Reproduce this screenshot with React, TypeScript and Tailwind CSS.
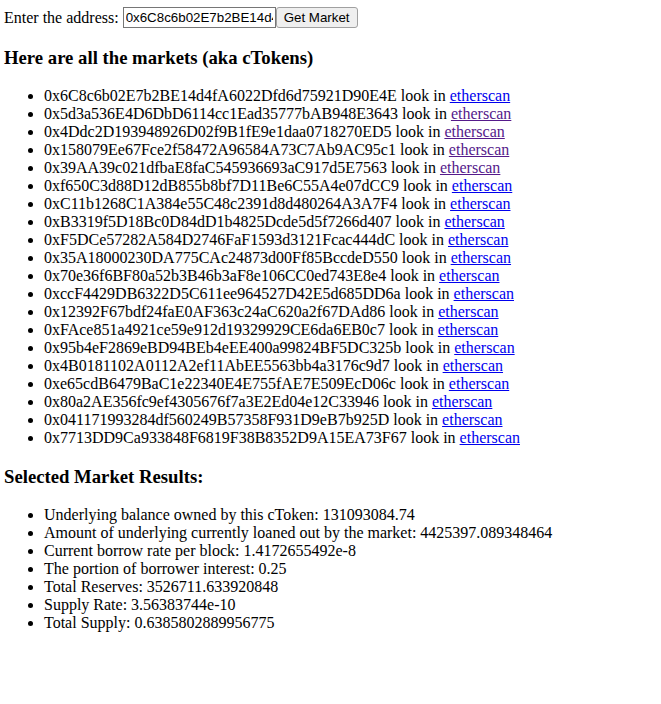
import React, { useState } from "react";

const markets: { address: string; visited?: boolean }[] = [
  { address: "0x6C8c6b02E7b2BE14d4fA6022Dfd6d75921D90E4E" },
  { address: "0x5d3a536E4D6DbD6114cc1Ead35777bAB948E3643", visited: true },
  { address: "0x4Ddc2D193948926D02f9B1fE9e1daa0718270ED5", visited: true },
  { address: "0x158079Ee67Fce2f58472A96584A73C7Ab9AC95c1", visited: true },
  { address: "0x39AA39c021dfbaE8faC545936693aC917d5E7563", visited: true },
  { address: "0xf650C3d88D12dB855b8bf7D11Be6C55A4e07dCC9" },
  { address: "0xC11b1268C1A384e55C48c2391d8d480264A3A7F4" },
  { address: "0xB3319f5D18Bc0D84dD1b4825Dcde5d5f7266d407" },
  { address: "0xF5DCe57282A584D2746FaF1593d3121Fcac444dC" },
  { address: "0x35A18000230DA775CAc24873d00Ff85BccdeD550" },
  { address: "0x70e36f6BF80a52b3B46b3aF8e106CC0ed743E8e4" },
  { address: "0xccF4429DB6322D5C611ee964527D42E5d685DD6a" },
  { address: "0x12392F67bdf24faE0AF363c24aC620a2f67DAd86" },
  { address: "0xFAce851a4921ce59e912d19329929CE6da6EB0c7" },
  { address: "0x95b4eF2869eBD94BEb4eEE400a99824BF5DC325b" },
  { address: "0x4B0181102A0112A2ef11AbEE5563bb4a3176c9d7" },
  { address: "0xe65cdB6479BaC1e22340E4E755fAE7E509EcD06c" },
  { address: "0x80a2AE356fc9ef4305676f7a3E2Ed04e12C33946" },
  { address: "0x041171993284df560249B57358F931D9eB7b925D" },
  { address: "0x7713DD9Ca933848F6819F38B8352D9A15EA73F67" },
];

const results = [
  "Underlying balance owned by this cToken: 131093084.74",
  "Amount of underlying currently loaned out by the market: 4425397.089348464",
  "Current borrow rate per block: 1.4172655492e-8",
  "The portion of borrower interest: 0.25",
  "Total Reserves: 3526711.633920848",
  "Supply Rate: 3.56383744e-10",
  "Total Supply: 0.6385802889956775",
];

export default function App() {
  const [address, setAddress] = useState(markets[0].address);

  return (
    <div className="min-h-[704px] bg-white pl-1 pt-[7px] text-[16px] text-black font-['Liberation_Serif','Times_New_Roman',serif]">
      <form className="flex h-[21px] items-center" onSubmit={(e) => e.preventDefault()}>
        <label className="mr-[4px] leading-[18px]">Enter the address:</label>
        <input
          type="text"
          value={address}
          onChange={(e) => setAddress(e.target.value)}
          className="h-[21px] w-[153px] border border-[#767676] px-[2px] text-[13.33px] text-black font-['Liberation_Sans',Arial,sans-serif] outline-none"
        />
        <button
          type="submit"
          className="h-[21px] rounded-[3px] border border-[#a0a0a0] bg-[#efefef] px-[7px] text-[13.33px] text-black font-['Liberation_Sans',Arial,sans-serif]"
        >
          Get Market
        </button>
      </form>

      <h3 className="mt-[18.72px] mb-[18.72px] text-[18.72px] font-bold leading-[21.5px]">
        Here are all the markets (aka cTokens)
      </h3>
      <ul className="list-disc pl-10 leading-[18px]">
        {markets.map((m) => (
          <li key={m.address}>
            {m.address} look in{" "}
            <a
              href="#"
              className={m.visited ? "text-[#551a8b] underline" : "text-[#0000ee] underline"}
            >
              etherscan
            </a>
          </li>
        ))}
      </ul>

      <h3 className="mt-[18.72px] mb-[18.72px] text-[18.72px] font-bold leading-[21.5px]">
        Selected Market Results:
      </h3>
      <ul className="list-disc pl-10 leading-[18px]">
        {results.map((r) => (
          <li key={r}>{r}</li>
        ))}
      </ul>
    </div>
  );
}
